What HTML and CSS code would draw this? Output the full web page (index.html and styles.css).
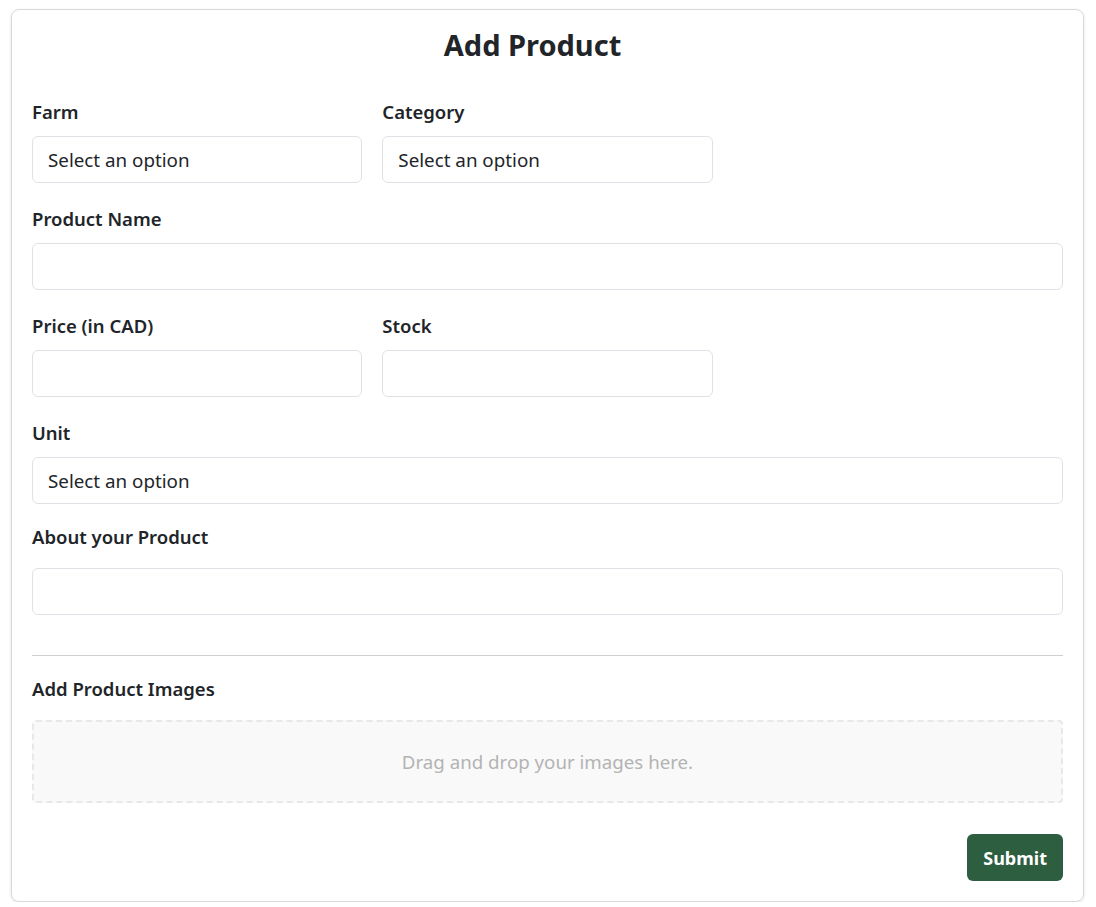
FILE: index.html
```html
<!DOCTYPE html>
<html lang="en">
<head>
<meta charset="utf-8">
<title>Add Product</title>
<link rel="stylesheet" href="styles.css">
</head>
<body>
<form class="card">
  <h1 class="title">Add Product</h1>
  <div class="grid">
    <div class="field">
      <label class="label">Farm</label>
      <div class="input">Select an option</div>
    </div>
    <div class="field">
      <label class="label">Category</label>
      <div class="input">Select an option</div>
    </div>
    <div class="field full">
      <label class="label">Product Name</label>
      <div class="input"></div>
    </div>
    <div class="field">
      <label class="label">Price (in CAD)</label>
      <div class="input"></div>
    </div>
    <div class="field">
      <label class="label">Stock</label>
      <div class="input"></div>
    </div>
    <div class="field full">
      <label class="label">Unit</label>
      <div class="input">Select an option</div>
    </div>
    <div class="field full about">
      <label class="label">About your Product</label>
      <div class="input"></div>
    </div>
  </div>
  <hr class="divider">
  <div class="images">
    <label class="label">Add Product Images</label>
    <div class="dropzone">Drag and drop your images here.</div>
  </div>
  <div class="actions">
    <button type="button" class="submit">Submit</button>
  </div>
</form>
</body>
</html>
```
FILE: styles.css
```css
* { box-sizing: border-box; }
html, body { background: #fff; }
body {
  margin: 0;
  padding: 9px 12px 0 11px;
  font-family: "Noto Sans", "Open Sans", sans-serif;
  color: #212529;
}
.card {
  border: 1px solid #d9d9d9;
  border-radius: 8px;
  box-shadow: 0 1px 3px rgba(0,0,0,0.12);
  padding: 17px 20px 19px;
  height: 893px;
}
.title {
  margin: 0;
  padding-right: 30px;
  text-align: center;
  font-size: 29px;
  line-height: 36px;
  font-weight: 700;
}
.grid {
  margin-top: 37px;
  display: grid;
  grid-template-columns: repeat(3, 1fr);
  column-gap: 20px;
  row-gap: 24px;
}
.full { grid-column: 1 / -1; }
.field { display: flex; flex-direction: column; gap: 12px; }
.about { gap: 19px; margin-top: -3px; }
.label {
  font-size: 18.5px;
  line-height: 24px;
  font-weight: 600;
}
.input {
  height: 47px;
  border: 1px solid #dee2e6;
  border-radius: 6px;
  padding: 0 15px;
  display: flex;
  align-items: center;
  font-size: 18.8px;
}
.divider {
  margin: 40px 0 0;
  border: 0;
  border-top: 1px solid #cfcfcf;
}
.images { margin-top: 21px; display: flex; flex-direction: column; gap: 19px; }
.dropzone {
  height: 83px;
  border: 2px dashed #e8e8e8;
  background: #f9f9f9;
  border-radius: 4px;
  display: flex;
  align-items: center;
  justify-content: center;
  color: #b3b3b3;
  font-size: 18.7px;
}
.actions { margin-top: 31px; display: flex; justify-content: flex-end; }
.submit {
  height: 47px;
  padding: 0 16px;
  background: #2e5e40;
  color: #fff;
  border: 0;
  border-radius: 6px;
  font-family: inherit;
  font-size: 18px;
  font-weight: 700;
}
```
